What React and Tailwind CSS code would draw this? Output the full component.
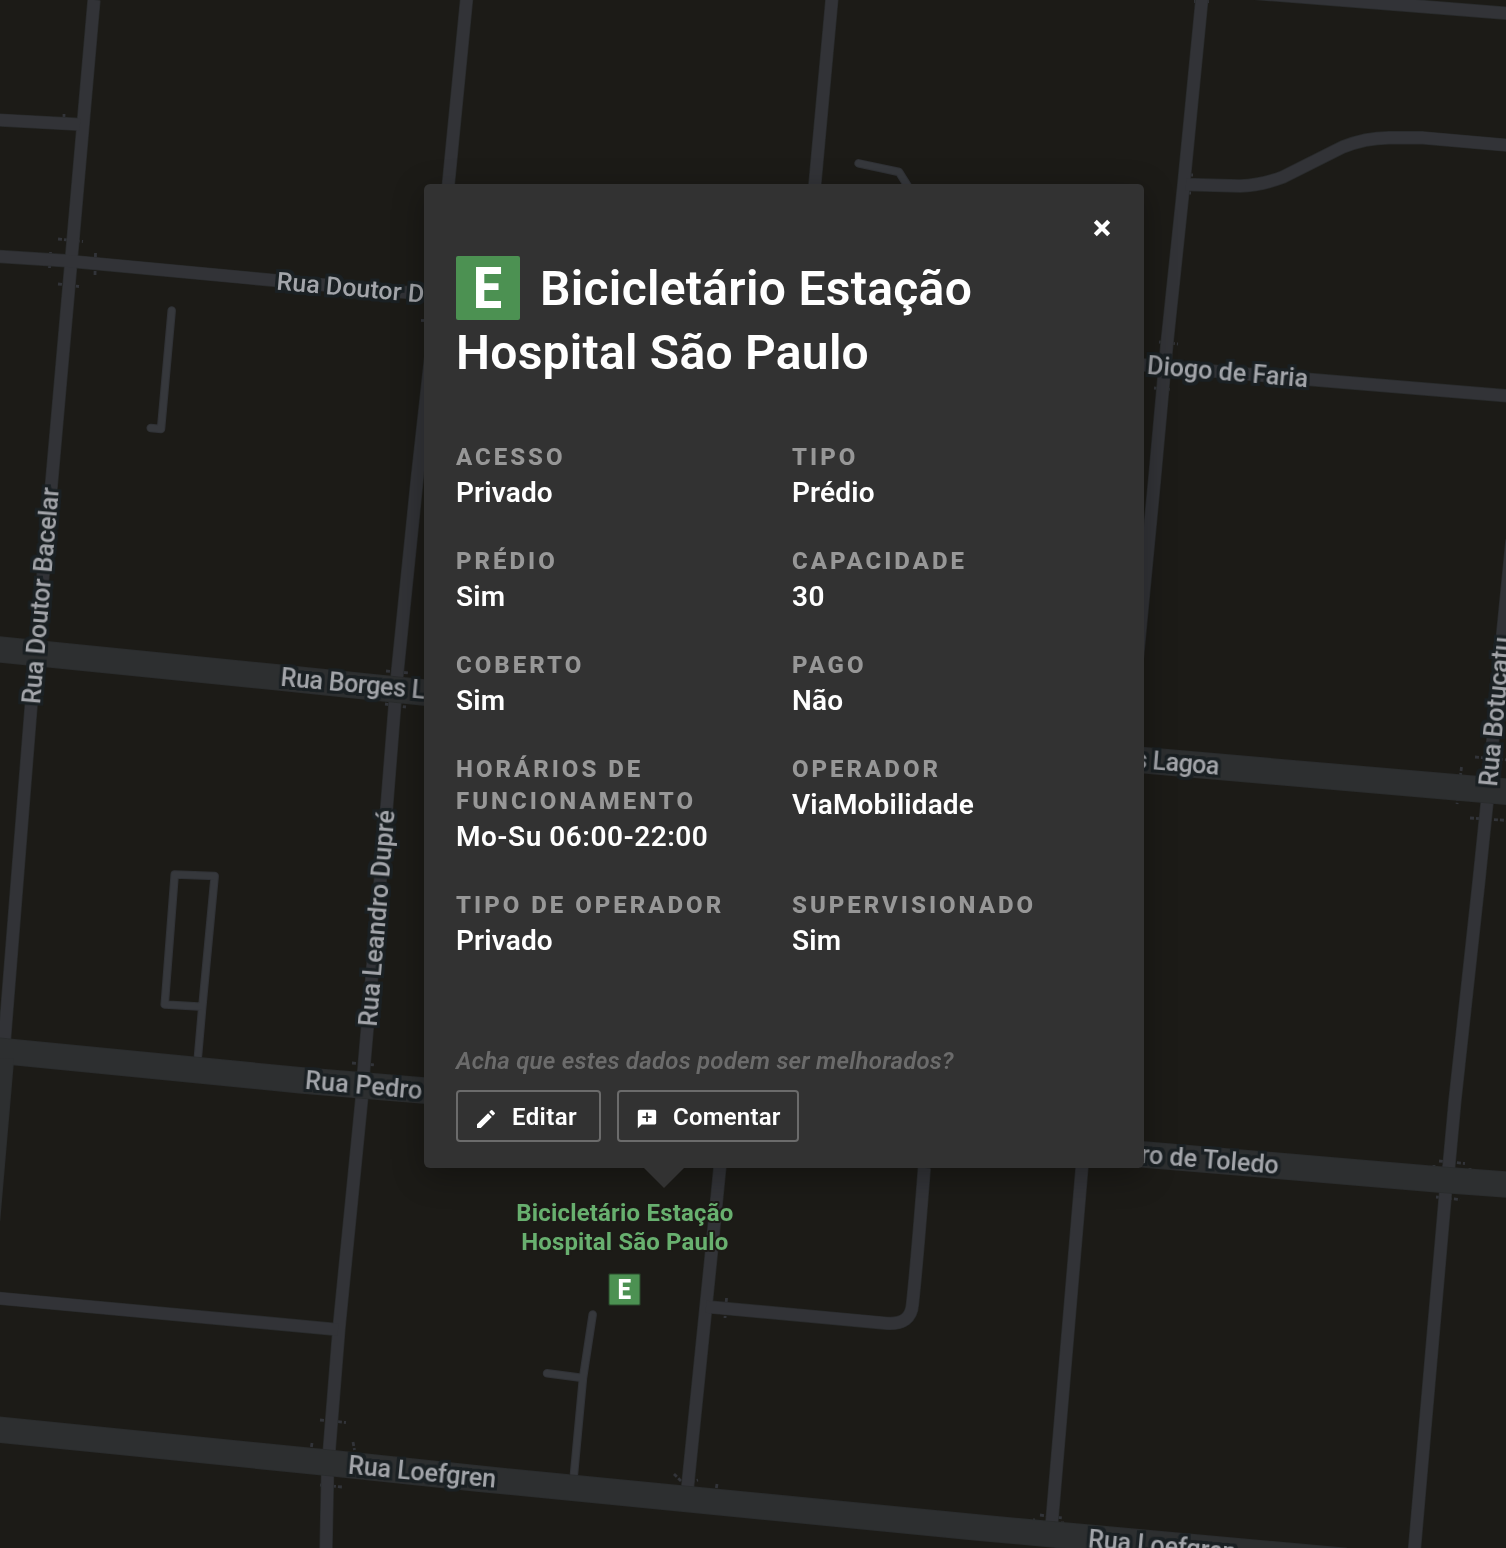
import React from "react";
import { MdEdit, MdAddComment } from "react-icons/md";

const MINOR = [
  "M94 0L73 240L51.3 486L31 707L4.5 1040",
  "M466.7 -2L448.5 183L432 345L417 480L397.3 673L394.8 705L386.7 807L367.5 1026L364.3 1063L361.7 1099L339 1328L329.3 1449L327.5 1477L326 1550",
  "M832 -2L815 183L770 640L719.8 1168L711.7 1250L687.3 1490",
  "M1202 -2L1183.7 185L1166.8 345L1154.5 480L1137.5 657L1081.9 1168L1051.6 1525",
  "M1512 540L1503 630L1487 803L1479 880L1455 1100L1448.9 1166L1445.4 1194L1414.4 1550",
  "M-2 120L80 124.4",
  "M-2 256.4L66 260.8L274 280.3L424 294L1144 365L1310 379.5L1508 396",
  "M1200 -11L1422 6.5L1508 13.4",
  "M1186 184.5L1240 186Q1262 185 1283 177Q1313 162 1342.7 147Q1365 138 1389 137.7L1423 137.8L1508 145.3",
  "M-2 1298.2L338 1329.6",
  "M706 1306.7L886.7 1323.3Q911 1325 912.5 1304Q917 1262 924.3 1168",
];

const MAJOR = [
  "M-2 649.3L278 677.4L424 692.5L1144 760.3L1508 791.8",
  "M-2 1050.6L11 1051.9L300 1080.2L424 1090.5L1144 1154.5L1442 1179.7L1508 1184.7",
  "M1 1058L-13 1220",
  "M-2 1429.6L328 1462.8L480 1478.8L980 1527.8L1346 1561",
];

const SERVICE = [
  "M171.7 310.5L161 429L150.7 428",
  "M198 1056L202.3 1006.8L214.7 876L174.7 874.6L164.7 1004.6L202.3 1006.8",
  "M592.7 1314.5L583 1378L574 1474M547 1373.3L583 1378",
  "M858.5 163.3L899 172L909 188",
];

const CROSSINGS = [
  "M58 239L83 241.5", "M58 284L79 286.5", "M50.500 252L49.500 268", "M95.500 253L95 275", "M64 114V120",
  "M421 320.500H424", "M386 671L410 673", "M385 704L406 707",
  "M352 1063L376 1065", "M320 1420L346 1422.500", "M312 1443L311 1450", "M353 1442L354.500 1450", "M320 1485L342 1487",
  "M726.500 1298L725 1318", "M674 1474L681 1481M691 1482L698 1480M717 1484L716 1490",
  "M1194 1.500H1209", "M1191 175H1193M1188 193H1191", "M1159 342L1178 344", "M1154 388L1171 389.500",
  "M1475 757L1508 760", "M1461.500 767L1457 804", "M1470 818L1508 820.500",
  "M1439 1161L1465 1163.500", "M1434 1165V1169M1470 1168V1172", "M1436 1197L1460 1199.500",
  "M1040 1515L1062 1518M1033 1520H1035M1061 1523H1064",
];

const STREET_LABELS = [
  { t: "Rua Doutor D", x: 276, y: 289.500, a: 5.07, w: 148 },
  { t: "Diogo de Faria", x: 1146.500, y: 373.800, a: 4.800, w: 161.500 },
  { t: "Rua Doutor Bacelar", x: 40, y: 704.500, a: -85, w: 217 },
  { t: "Rua Borges L", x: 280, y: 685.700, a: 5.200, w: 145 },
  { t: "s Lagoa", x: 1134, y: 767.700, a: 4.800, w: 85 },
  { t: "Rua Leandro Dupré", x: 376.600, y: 1027, a: -85.200, w: 217 },
  { t: "Rua Botucatu", x: 1497, y: 787, a: -84.600, w: 150 },
  { t: "Rua Pedro", x: 304.500, y: 1088.800, a: 5.100, w: 117.500 },
  { t: "ro de Toledo", x: 1140, y: 1162.800, a: 4.600, w: 138.500 },
  { t: "Rua Loefgren", x: 347.500, y: 1473.600, a: 5.450, w: 148.500 },
  { t: "Rua Loefgren", x: 1087.500, y: 1547.500, a: 5.200, w: 148.500 },
];

const FIELDS = [
  ["Acesso", "Privado"],
  ["Tipo", "Prédio"],
  ["Prédio", "Sim"],
  ["Capacidade", "30"],
  ["Coberto", "Sim"],
  ["Pago", "Não"],
  ["Horários de funcionamento", "Mo-Su 06:00-22:00"],
  ["Operador", "ViaMobilidade"],
  ["Tipo de operador", "Privado"],
  ["Supervisionado", "Sim"],
];

function Roads({ paths, color, casing, width, inner, cap = "butt" }) {
  return (
    <g fill="none" strokeLinejoin="round" strokeLinecap={cap}>
      {paths.map((d) => (
        <path key={d} d={d} stroke={casing} strokeWidth={width} />
      ))}
      {paths.map((d) => (
        <path key={d} d={d} stroke={color} strokeWidth={inner} />
      ))}
    </g>
  );
}

function StationMark({ x, y, size }) {
  return (
    <g transform={`translate(${x} ${y}) scale(${size / 64})`}>
      <rect width="64" height="64" rx="2" fill="#4c9152" />
      <text x="17" y="52.300" fontSize="57" fontWeight="800" fill="#fff" textLength="29" lengthAdjust="spacingAndGlyphs">
        E
      </text>
    </g>
  );
}

function CityMap() {
  return (
    <svg className="absolute inset-0" width="1506" height="1548" viewBox="0 0 1506 1548">
      <defs>
        {/* Grows the glyphs into a dark halo kept below all the letters */}
        <filter id="halo" filterUnits="userSpaceOnUse" x="0" y="0" width="1506" height="1548" colorInterpolationFilters="sRGB">
          <feMorphology in="SourceAlpha" operator="dilate" radius="3" result="grown" />
          <feGaussianBlur in="grown" stdDeviation="0.7" result="soft" />
          <feFlood floodColor="#1a2023" />
          <feComposite in2="soft" operator="in" result="shade" />
          <feMerge>
            <feMergeNode in="shade" />
            <feMergeNode in="SourceGraphic" />
          </feMerge>
        </filter>
      </defs>
      <Roads paths={SERVICE} color="#36383c" casing="#303236" width={8.5} inner={6.5} cap="round" />
      <g fill="none" stroke="#323439" strokeWidth="2.800" strokeDasharray="4 2">
        {CROSSINGS.map((d) => (
          <path key={d} d={d} />
        ))}
      </g>
      <Roads paths={MINOR} color="#323337" casing="#292b2c" width={13.4} inner={12} />
      <Roads paths={MAJOR} color="#2d2f30" casing="#2a2c2d" width={26.5} inner={25} />
      <g fontSize="25" fontWeight="500" fill="#a3a5aa" filter="url(#halo)">
        {STREET_LABELS.map((l) => (
          <text key={l.t + l.x} transform={`translate(${l.x} ${l.y}) rotate(${l.a})`} textLength={l.w}>
            {l.t}
          </text>
        ))}
      </g>
      <g fontSize="24" fontWeight="700" fill="#68b06f" stroke="#1c1b17" strokeWidth="4" strokeLinejoin="round" paintOrder="stroke" textAnchor="middle">
        <text x="624.700" y="1220.500" textLength="217">Bicicletário Estação</text>
        <text x="624.700" y="1249.800" textLength="207">Hospital São Paulo</text>
      </g>
      <rect x="608.500" y="1273.500" width="32" height="32" rx="1" fill="#2b4a2d" />
      <StationMark x={609.5} y={1274.5} size={30} />
    </svg>
  );
}

function ActionButton({ icon, label, className }) {
  return (
    <button className={`flex h-[52px] items-center rounded border-2 border-[#6b6b6b] pt-0.5 text-2xl font-semibold text-white ${className}`}>
      {icon}
      {label}
    </button>
  );
}

function Popup() {
  return (
    <div className="absolute left-[424px] top-[184px] flex h-[984px] w-[720px] flex-col rounded-md bg-[#323232] px-8 pt-6 shadow-[0_8px_32px_rgba(0,0,0,0.3)]">
      <div className="flex h-10 shrink-0 items-center justify-end pr-0.5">
        <svg width="16" height="16" viewBox="0 0 16 16" className="block overflow-visible" aria-label="Fechar">
          <path d="M1.300 1.300L14.700 14.700M14.700 1.300L1.300 14.700" stroke="#fff" strokeWidth="4.200" />
        </svg>
      </div>
      <h1 className="mt-2 text-[48px] font-semibold leading-[64px] text-white">
        <span className="flex h-16 items-start gap-5">
          <svg width="64" height="64" viewBox="0 0 64 64" className="block">
            <StationMark x={0} y={0} size={64} />
          </svg>
          <span className="pt-px tracking-[0.3px]">Bicicletário Estação</span>
        </span>
        <span className="block pt-px tracking-[0.25px]">Hospital São Paulo</span>
      </h1>
      <dl className="mt-14 grid grid-cols-2 gap-x-4 gap-y-8">
        {FIELDS.map(([label, value]) => (
          <div key={label}>
            <dt className="text-2xl font-extrabold uppercase leading-8 tracking-[3px] text-[#979797]">{label}</dt>
            <dd className={`text-[28px] font-semibold leading-10 text-white ${/\d/.test(value) ? "tracking-[0.5px]" : "tracking-[0.15px]"}`}>
              {value}
            </dd>
          </div>
        ))}
      </dl>
      <p className="mt-[84px] text-2xl font-semibold italic leading-8 tracking-[0.23px] text-[#6b6b6b]">
        Acha que estes dados podem ser melhorados?
      </p>
      <div className="mt-[13px] flex gap-4">
        <ActionButton className="w-[145px] pl-4 tracking-[0.4px]" icon={<MdEdit size={24} className="mr-3.5 mt-1" />} label="Editar" />
        <ActionButton className="w-[182px] pl-[17px] tracking-[0.2px]" icon={<MdAddComment size={22} className="mr-[15px] mt-1 -scale-x-100" />} label="Comentar" />
      </div>
      <svg width="40" height="20" viewBox="0 0 40 20" className="absolute left-[220px] top-full">
        <path d="M0 0H40L20 20Z" fill="#323232" />
      </svg>
    </div>
  );
}

export default function App() {
  return (
    <main className="relative h-[1548px] w-[1506px] overflow-hidden bg-[#1c1b17] font-['Roboto',sans-serif]">
      <CityMap />
      <Popup />
    </main>
  );
}
